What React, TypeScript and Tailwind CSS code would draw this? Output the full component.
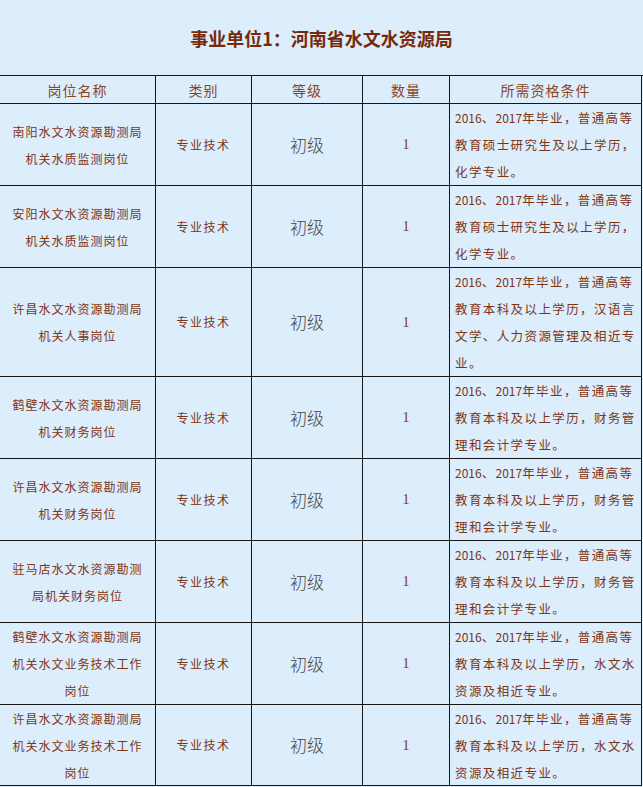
import React from "react";

type Row = { name: string[]; req: string[]; tall?: boolean };

const reqA = ["2016、2017年毕业，普通高等", "教育硕士研究生及以上学历，", "化学专业。"];
const reqFin = ["2016、2017年毕业，普通高等", "教育本科及以上学历，财务管", "理和会计学专业。"];
const reqWater = ["2016、2017年毕业，普通高等", "教育本科及以上学历，水文水", "资源及相近专业。"];

const rows: Row[] = [
  { name: ["南阳水文水资源勘测局", "机关水质监测岗位"], req: reqA },
  { name: ["安阳水文水资源勘测局", "机关水质监测岗位"], req: reqA },
  {
    name: ["许昌水文水资源勘测局", "机关人事岗位"],
    req: ["2016、2017年毕业，普通高等", "教育本科及以上学历，汉语言", "文学、人力资源管理及相近专", "业。"],
    tall: true,
  },
  { name: ["鹤壁水文水资源勘测局", "机关财务岗位"], req: reqFin },
  { name: ["许昌水文水资源勘测局", "机关财务岗位"], req: reqFin },
  { name: ["驻马店水文水资源勘测", "局机关财务岗位"], req: reqFin },
  { name: ["鹤壁水文水资源勘测局", "机关水文业务技术工作", "岗位"], req: reqWater },
  { name: ["许昌水文水资源勘测局", "机关水文业务技术工作", "岗位"], req: reqWater },
];

function ReqLine({ text }: { text: string }) {
  const parts = text.split(/(\d+)/).filter((p) => p.length > 0);
  return (
    <div className="whitespace-nowrap">
      {parts.map((p, i) =>
        /^\d+$/.test(p) ? (
          <span key={i} className="tracking-[0px] text-[12px]">
            {p}
          </span>
        ) : (
          <span key={i}>{p}</span>
        )
      )}
    </div>
  );
}

const cell = "border-r border-b border-[#161616] flex items-center";

export default function App() {
  return (
    <div className="w-[643px] h-[787px] bg-[#dcedfc] font-['Noto_Sans_CJK_SC',sans-serif] text-[#7f3414]">
      <div className="h-[75px] flex items-center justify-center">
        <h1 className="text-[18px] font-bold text-[#772a0b] leading-none pt-[1px]">事业单位1：河南省水文水资源局</h1>
      </div>
      <div className="grid grid-cols-[156px_96px_111px_87px_192px] border-t border-[#161616]">
        {["岗位名称", "类别", "等级", "数量", "所需资格条件"].map((h) => (
          <div
            key={h}
            className={`${cell} h-[28px] justify-center text-[14px] tracking-[1px] text-[#8c4522] leading-none`}
          >
            {h}
          </div>
        ))}
        {rows.map((r, i) => {
          const h = r.tall ? "h-[109px]" : i === rows.length - 1 ? "h-[81px]" : "h-[82px]";
          return (
            <React.Fragment key={i}>
              <div className={`${cell} ${h} justify-center text-center text-[12px] tracking-[1px] leading-[27px]`}>
                <div>
                  {r.name.map((l, j) => (
                    <div key={j} className="whitespace-nowrap">
                      {l}
                    </div>
                  ))}
                </div>
              </div>
              <div className={`${cell} ${h} justify-center text-[12px] tracking-[1.5px]`}>专业技术</div>
              <div className={`${cell} ${h} justify-center text-[17px] font-light text-[#484848]`}>初级</div>
              <div className={`${cell} ${h} justify-center text-[14px] font-['Liberation_Serif',serif]`}>1</div>
              <div className={`${cell} ${h} pl-[5px] text-[12.5px] tracking-[1.4px] leading-[27px]`}>
                <div>
                  {r.req.map((l, j) => (
                    <ReqLine key={j} text={l} />
                  ))}
                </div>
              </div>
            </React.Fragment>
          );
        })}
      </div>
    </div>
  );
}
